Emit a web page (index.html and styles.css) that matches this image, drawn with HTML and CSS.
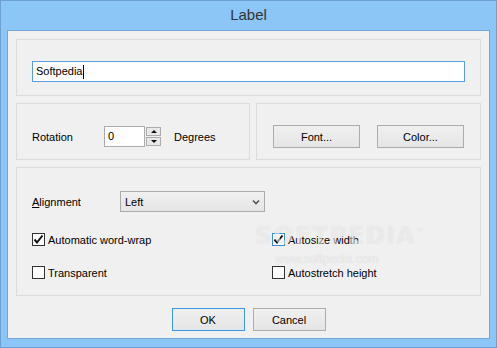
FILE: index.html
```html
<html>
  <head>
    <meta charset="UTF-8">
    <link rel="stylesheet" href="styles.css">
  </head>
  <body>
    <div class="window">
      <div class="titlebar">Label</div>
      <div class="client">
        <div class="group group-text">
          <div class="textbox">Softpedia<span class="caret"></span></div>
        </div>

        <div class="row">
          <div class="group group-rotation">
            <span class="lbl lbl-rotation">Rotation</span>
            <div class="spin-input">0</div>
            <div class="spinner">
              <div class="spin-btn"><span class="tri-up"></span></div>
              <div class="spin-btn"><span class="tri-down"></span></div>
            </div>
            <span class="lbl lbl-degrees">Degrees</span>
          </div>
          <div class="group group-buttons">
            <div class="btn btn-wide">Font...</div>
            <div class="btn btn-wide">Color...</div>
          </div>
        </div>

        <div class="group group-options">
          <div class="align-row">
            <span class="lbl lbl-align"><u>A</u>lignment</span>
            <div class="select">
              <span>Left</span>
              <svg class="chevron" width="8" height="6" viewBox="0 0 8 6">
                <path d="M1 1.5 L4 4.5 L7 1.5" fill="none" stroke="#555" stroke-width="1.6"/>
              </svg>
            </div>
          </div>
          <div class="checks">
            <label class="check"><span class="box"><svg width="11" height="11" viewBox="0 0 11 11"><path d="M1.5 5.5 L4 8.5 L9.5 1.5" fill="none" stroke="#111" stroke-width="2"/></svg></span>Automatic word-wrap</label>
            <label class="check"><span class="box box-focus"><svg width="11" height="11" viewBox="0 0 11 11"><path d="M1.5 5.5 L4 8.5 L9.5 1.5" fill="none" stroke="#111" stroke-width="2"/></svg></span>Autosize width</label>
            <label class="check"><span class="box"></span>Transparent</label>
            <label class="check"><span class="box"></span>Autostretch height</label>
          </div>
          <div class="watermark">
            <div class="wm-big">SOFTPEDIA<sup>™</sup></div>
            <div class="wm-small">www.softpedia.com</div>
          </div>
        </div>

        <div class="actions">
          <div class="btn btn-ok">OK</div>
          <div class="btn">Cancel</div>
        </div>
      </div>
    </div>
  </body>
</html>
```

FILE: styles.css
```css
body {
  margin: 0;
  font-family: "Liberation Sans", Arial, sans-serif;
  font-size: 11px;
  color: #000;
  background: #fff;
}
.window {
  width: 497px;
  height: 348px;
  box-sizing: border-box;
  border: 1px solid #6d9fd3;
  background: #8cc6f7;
}
.titlebar {
  height: 29px;
  line-height: 28px;
  text-align: center;
  font-size: 15px;
  color: #333;
}
.client {
  position: relative;
  margin-left: 6px;
  width: 483px;
  height: 309px;
  box-sizing: border-box;
  border: 1px solid #72a5d9;
  background: #f0f0f0;
  padding: 8px 8px 0 8px;
  display: flex;
  flex-direction: column;
  gap: 7px;
}
.group {
  box-sizing: border-box;
  border: 1px solid #dcdcdc;
  position: relative;
}
.group-text {
  height: 57px;
  padding: 21px 15px 0 15px;
}
.textbox {
  height: 21px;
  box-sizing: border-box;
  border: 1px solid #569de5;
  background: #fff;
  padding: 0 3px;
  line-height: 19px;
  display: flex;
  align-items: center;
}
.caret {
  display: inline-block;
  width: 1px;
  height: 14px;
  background: #000;
  margin-left: 1px;
}
.row {
  display: flex;
  gap: 6px;
}
.group-rotation {
  width: 234px;
  height: 57px;
  display: flex;
  align-items: center;
  padding: 10px 15px 0 15px;
}
.lbl-rotation {
  width: 72px;
}
.spin-input {
  width: 41px;
  height: 21px;
  box-sizing: border-box;
  border: 1px solid #acacac;
  background: #fff;
  padding: 0 3px;
  line-height: 19px;
}
.spinner {
  margin-left: 1px;
  display: flex;
  flex-direction: column;
  gap: 1px;
}
.spin-btn {
  width: 15px;
  height: 9px;
  box-sizing: border-box;
  border: 1px solid #acacac;
  background: #e8e8e8;
  display: flex;
  align-items: center;
  justify-content: center;
}
.tri-up {
  border-left: 3px solid transparent;
  border-right: 3px solid transparent;
  border-bottom: 3px solid #111;
}
.tri-down {
  border-left: 3px solid transparent;
  border-right: 3px solid transparent;
  border-top: 3px solid #111;
}
.lbl-degrees {
  margin-left: 13px;
}
.group-buttons {
  width: 225px;
  height: 57px;
  display: flex;
  align-items: center;
  gap: 17px;
  padding: 10px 16px 0 16px;
}
.btn {
  width: 73px;
  height: 23px;
  box-sizing: border-box;
  border: 1px solid #acacac;
  background: linear-gradient(#f0f0f0, #e5e5e5);
  display: flex;
  align-items: center;
  justify-content: center;
}
.btn-wide {
  width: 87px;
}
.btn-ok {
  border-color: #3c96e6;
}
.group-options {
  height: 129px;
  padding: 23px 15px 0 15px;
}
.align-row {
  display: flex;
  align-items: center;
  height: 21px;
}
.lbl-align {
  width: 88px;
}
.select {
  width: 145px;
  height: 21px;
  box-sizing: border-box;
  border: 1px solid #acacac;
  background: linear-gradient(#f0f0f0, #e5e5e5);
  display: flex;
  align-items: center;
  justify-content: space-between;
  padding: 0 4px 0 4px;
}
.checks {
  margin-top: 21px;
  display: grid;
  grid-template-columns: 240px 1fr;
  row-gap: 20px;
}
.check {
  display: flex;
  align-items: center;
  height: 13px;
}
.box {
  width: 13px;
  height: 13px;
  box-sizing: border-box;
  border: 1px solid #333;
  background: #fff;
  margin-right: 3px;
  display: flex;
  align-items: center;
  justify-content: center;
}
.box-focus {
  border-color: #3c8de0;
}
.watermark {
  position: absolute;
  left: 238px;
  top: 54px;
  pointer-events: none;
}
.wm-big {
  font-family: "DejaVu Sans", sans-serif;
  font-weight: bold;
  font-size: 24px;
  letter-spacing: 1px;
  color: rgba(255, 255, 255, 0.55);
  text-shadow: 0 0 1px rgba(0, 0, 0, 0.12);
}
.wm-big sup {
  font-size: 9px;
}
.wm-small {
  margin: 2px 0 0 20px;
  font-size: 12px;
  color: rgba(255, 255, 255, 0.6);
  text-shadow: 0 0 1px rgba(0, 0, 0, 0.15);
}
.actions {
  margin-top: 5px;
  display: flex;
  justify-content: center;
  gap: 8px;
}
```
